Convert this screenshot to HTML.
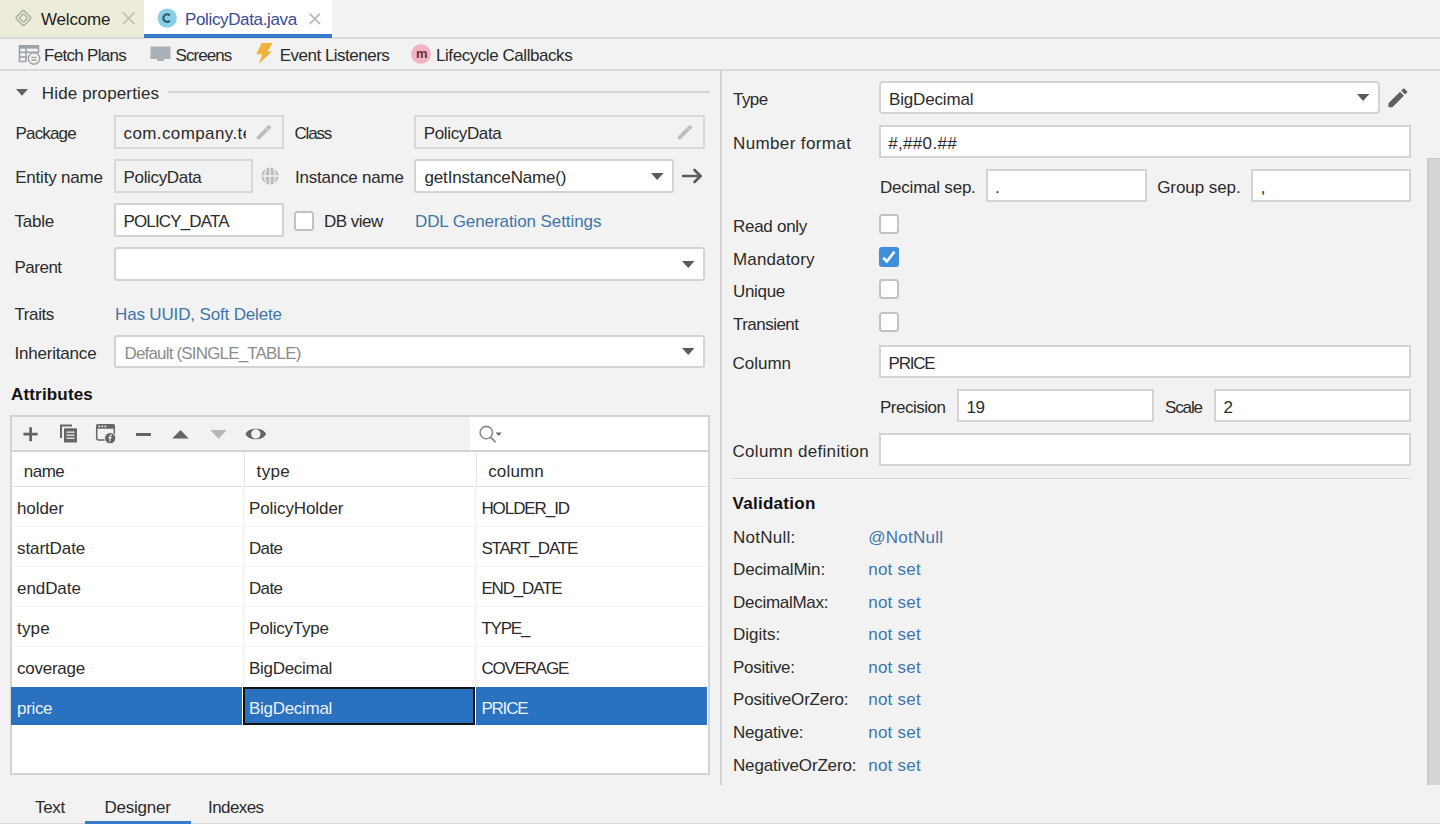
<!DOCTYPE html>
<html><head><meta charset="utf-8"><style>
*{box-sizing:border-box;margin:0;padding:0}
html,body{width:1440px;height:824px;overflow:hidden;background:#f2f2f2;font-family:"Liberation Sans",sans-serif;color:#2b2b2b}
.a{position:absolute}
.t{position:absolute;white-space:nowrap;font-size:17px;line-height:20px}
.f{position:absolute;background:#fff;border:2px solid #d3d3d3}
.fd{position:absolute;background:#f2f2f2;border:2px solid #d8d8d8}
.cb{position:absolute;width:20px;height:20px;background:#fff;border:2px solid #c2c2c2;border-radius:3.5px}
.hl{position:absolute;height:1px;background:#d4d4d4}
.vl{position:absolute;width:1px;background:#d4d4d4}
</style></head><body>
<div class="a" style="left:0;top:0;width:144px;height:37px;background:#ececd8"></div>
<div class="a" style="left:144px;top:0;width:188px;height:37px;background:#fff"></div>
<div class="a" style="left:0;top:37px;width:1440px;height:2px;background:#d9d9d9"></div>
<div class="a" style="left:144px;top:34px;width:188px;height:4px;background:#3a7bc9"></div>
<svg class="a" style="left:13px;top:8px" width="21" height="21" viewBox="13 8 21 21"><rect x="17.7" y="12.3" width="11.4" height="11.4" rx="2.2" transform="rotate(45 23.4 18)" fill="none" stroke="#aeb0a6" stroke-width="1.6"/><rect x="20.45" y="15.05" width="5.9" height="5.9" rx="1" transform="rotate(45 23.4 18)" fill="none" stroke="#aeb0a6" stroke-width="1.6"/></svg>
<div class="t" style="left:41.0px;top:10px;letter-spacing:-0.17px;color:#1e1e1e">Welcome</div>
<svg class="a" style="left:121px;top:11px" width="15" height="15" viewBox="0 0 15 15"><path d="M2 1.5 L13.4 12.9 M13.4 1.5 L2 12.9" stroke="#b8b8b0" stroke-width="1.4"/></svg>
<svg class="a" style="left:157px;top:8px" width="21" height="21" viewBox="0 0 21 21"><circle cx="10.2" cy="10.1" r="9.7" fill="#89cfe6"/><path d="M12.9 7.5 A3.8 3.8 0 1 0 12.9 12.7" fill="none" stroke="#2d5868" stroke-width="2.1"/></svg>
<div class="t" style="left:185.0px;top:10px;letter-spacing:-0.36px;color:#3a4a9c">PolicyData.java</div>
<svg class="a" style="left:308px;top:12px" width="14" height="14" viewBox="0 0 14 14"><path d="M1.6 1.6 L12 12 M12 1.6 L1.6 12" stroke="#b4b4b4" stroke-width="1.5"/></svg>
<div class="a" style="left:0;top:69px;width:1440px;height:2px;background:#d9d9d9"></div>
<svg class="a" style="left:18px;top:44px" width="24" height="21" viewBox="0 0 24 21"><g stroke="#9aa2aa" stroke-width="1.6" fill="none"><path d="M1.5 2 H20.5 V9"/><path d="M1.5 2 V17.5 H8"/><path d="M8 2 V17.5"/><path d="M1.5 8.3 H20.5"/><path d="M1.5 13 H9"/></g><rect x="1" y="1" width="20" height="3.6" fill="#9aa2aa"/><circle cx="16" cy="14.5" r="5.7" fill="#f2f2f2" stroke="#a3a3a3" stroke-width="1.5"/><path d="M13.3 13.3 H18.7 M13.3 16 H18.7" stroke="#a3a3a3" stroke-width="1.3"/></svg>
<div class="t" style="left:44.0px;top:46px;letter-spacing:-0.70px">Fetch Plans</div>
<svg class="a" style="left:150px;top:46px" width="21" height="16" viewBox="0 0 21 16"><rect x="0.5" y="0.5" width="20" height="12.5" fill="#a8b0b8"/><rect x="7" y="13" width="7" height="2" fill="#a8b0b8"/></svg>
<div class="t" style="left:175.5px;top:46px;letter-spacing:-0.92px">Screens</div>
<svg class="a" style="left:254px;top:41px" width="22" height="24" viewBox="254 41 22 24"><path d="M261.6 43.1 L272.4 43.1 L267.6 51.6 L271.9 51.6 L258.9 63.8 L262.2 54.2 L256.3 54.2 Z" fill="#f2b33c"/></svg>
<div class="t" style="left:279.7px;top:46px;letter-spacing:-0.50px">Event Listeners</div>
<div class="a" style="left:411.4px;top:43.5px;width:20px;height:20px;border-radius:50%;background:#f4b5c3"></div>
<div class="a" style="left:411.4px;top:46.8px;width:21px;text-align:center;font-size:13px;line-height:13px;font-weight:bold;color:#6a2d3c">m</div>
<div class="t" style="left:436.0px;top:46px;letter-spacing:-0.44px">Lifecycle Callbacks</div>
<div class="a" style="left:720px;top:70px;width:2px;height:715px;background:#d2d2d2"></div>
<svg class="a" style="left:16px;top:89.3px" width="12" height="6.8" viewBox="0 0 12 6.8"><path d="M0 0H12L6.0 6.8Z" fill="#626262"/></svg>
<div class="t" style="left:41.8px;top:84px;letter-spacing:0.14px">Hide properties</div>
<div class="a" style="left:168px;top:91px;width:542px;height:2px;background:#d6d6d6"></div>
<div class="t" style="left:15.5px;top:124px;letter-spacing:-0.83px">Package</div>
<div class="fd" style="left:114px;top:115px;width:170px;height:34px"></div>
<div class="a" style="left:115px;top:116px;width:130.5px;height:32px;overflow:hidden"><div class="t" style="left:8.5px;top:8px;letter-spacing:0.4px">com.company.test</div></div>
<svg class="a" style="left:256px;top:125px" width="16" height="15" viewBox="0 0 16 15"><path d="M2.6 12.6 L13 2.2" stroke="#bdbdbd" stroke-width="3.8" stroke-linecap="round"/><path d="M10.6 4.6 L11.6 3.6" stroke="#f2f2f2" stroke-width="1.1"/></svg>
<div class="t" style="left:294.5px;top:124px;letter-spacing:-1.20px">Class</div>
<div class="fd" style="left:414px;top:115px;width:291px;height:34px"></div>
<div class="t" style="left:423.8px;top:124px;letter-spacing:-0.37px">PolicyData</div>
<svg class="a" style="left:677px;top:125px" width="16" height="15" viewBox="0 0 16 15"><path d="M2.6 12.6 L13 2.2" stroke="#bdbdbd" stroke-width="3.8" stroke-linecap="round"/><path d="M10.6 4.6 L11.6 3.6" stroke="#f2f2f2" stroke-width="1.1"/></svg>
<div class="t" style="left:15.2px;top:168px;letter-spacing:-0.20px">Entity name</div>
<div class="fd" style="left:114px;top:159px;width:139px;height:34px"></div>
<div class="t" style="left:123.5px;top:168px;letter-spacing:-0.33px">PolicyData</div>
<svg class="a" style="left:261px;top:167px" width="18" height="18" viewBox="0 0 18 18"><circle cx="9" cy="9" r="8.6" fill="#bdbdbd"/><path d="M9 0.5 V17.5 M0.5 9 H17.5 M5.2 1.5 C3.5 6 3.5 12 5.2 16.5 M12.8 1.5 C14.5 6 14.5 12 12.8 16.5" stroke="#f2f2f2" stroke-width="1.3" fill="none"/></svg>
<div class="t" style="left:295.0px;top:168px;letter-spacing:-0.21px">Instance name</div>
<div class="f" style="left:414px;top:159px;width:260px;height:34px;border-radius:3px"></div>
<div class="t" style="left:424.5px;top:168px;letter-spacing:-0.16px">getInstanceName()</div>
<svg class="a" style="left:651px;top:173px" width="12.5" height="7" viewBox="0 0 12.5 7"><path d="M0 0H12.5L6.25 7Z" fill="#5a5a5a"/></svg>
<svg class="a" style="left:682px;top:168px" width="21" height="16" viewBox="0 0 21 16"><path d="M1 8 H18.5 M12.5 2 L18.7 8 L12.5 14" fill="none" stroke="#5c5c5c" stroke-width="2.6" stroke-linecap="round" stroke-linejoin="round"/></svg>
<div class="t" style="left:14.5px;top:212px;letter-spacing:-0.25px">Table</div>
<div class="f" style="left:114px;top:203px;width:170px;height:34px"></div>
<div class="t" style="left:123.5px;top:212px;letter-spacing:-0.85px">POLICY_DATA</div>
<div class="cb" style="left:294px;top:211px"></div>
<div class="t" style="left:324.0px;top:212px;letter-spacing:-0.50px">DB view</div>
<div class="t" style="left:415.0px;top:212px;letter-spacing:-0.09px;color:#3f76aa">DDL Generation Settings</div>
<div class="t" style="left:14.5px;top:258px;letter-spacing:-0.50px">Parent</div>
<div class="f" style="left:114px;top:247px;width:591px;height:34px;border-radius:3px"></div>
<svg class="a" style="left:682px;top:261px" width="12.5" height="7" viewBox="0 0 12.5 7"><path d="M0 0H12.5L6.25 7Z" fill="#5a5a5a"/></svg>
<div class="t" style="left:14.5px;top:305px;letter-spacing:-0.40px">Traits</div>
<div class="t" style="left:115.0px;top:305px;letter-spacing:-0.15px;color:#3f76aa">Has UUID, Soft Delete</div>
<div class="t" style="left:14.5px;top:344px;letter-spacing:-0.20px">Inheritance</div>
<div class="f" style="left:114px;top:335px;width:591px;height:33px;border-radius:3px"></div>
<div class="t" style="left:124.5px;top:344px;letter-spacing:-0.83px;color:#8c8c8c">Default (SINGLE_TABLE)</div>
<svg class="a" style="left:682px;top:348px" width="12.5" height="7" viewBox="0 0 12.5 7"><path d="M0 0H12.5L6.25 7Z" fill="#5a5a5a"/></svg>
<div class="t" style="left:11.0px;top:385px;letter-spacing:0.17px;color:#111;font-weight:bold">Attributes</div>
<div class="a" style="left:10px;top:415px;width:700px;height:360px;background:#fff;border:2px solid #d3d3d3"></div>
<div class="a" style="left:12px;top:417px;width:458px;height:34px;background:#f2f2f2"></div>
<div class="a" style="left:12px;top:450px;width:696px;height:2px;background:#d3d3d3"></div>
<svg class="a" style="left:22px;top:426px" width="17" height="17" viewBox="0 0 17 17"><path d="M8.6 1.2 V15.2 M1.4 8.2 H15.6" stroke="#626262" stroke-width="2.7"/></svg>
<svg class="a" style="left:59px;top:424px" width="19" height="19" viewBox="0 0 19 19"><path d="M1 0.5 H13 V2.5 H3 V14 H1 Z" fill="#666"/><rect x="5" y="4.3" width="13" height="14.2" fill="#666"/><path d="M7.5 8.2 H15.5 M7.5 11.2 H15.5 M7.5 14.2 H15.5" stroke="#f2f2f2" stroke-width="1.3"/></svg>
<svg class="a" style="left:95px;top:423px" width="22" height="22" viewBox="0 0 22 22"><rect x="1.7" y="1.7" width="17.6" height="15.4" rx="2" fill="none" stroke="#666" stroke-width="1.5"/><path d="M1 3 Q1 1 3 1 H18 Q20 1 20 3 V5.8 H1 Z" fill="#666"/><circle cx="4.3" cy="3.4" r="0.9" fill="#f2f2f2"/><circle cx="7.3" cy="3.4" r="0.9" fill="#f2f2f2"/><circle cx="10.3" cy="3.4" r="0.9" fill="#f2f2f2"/><circle cx="15.2" cy="15.2" r="5.6" fill="#636363" stroke="#f2f2f2" stroke-width="1"/><path d="M16.9 12.2 C15.6 11.9 14.9 12.5 14.9 13.6 V18.6 M13.5 14.7 H16.6" stroke="#f2f2f2" stroke-width="1.2" fill="none"/></svg>
<div class="a" style="left:136px;top:432.5px;width:14.5px;height:3px;background:#646464"></div>
<svg class="a" style="left:172px;top:430px" width="17" height="9" viewBox="0 0 17 9"><path d="M0.3 8.5 H16.7 L8.5 0 Z" fill="#646464"/></svg>
<svg class="a" style="left:210px;top:429.5px" width="17" height="9" viewBox="0 0 17 9"><path d="M0.3 0 H16.7 L8.5 8.8 Z" fill="#b6b6b6"/></svg>
<svg class="a" style="left:245px;top:426px" width="22" height="16" viewBox="0 0 22 16"><path d="M0.6 8 C3 1 18.6 1 21 8 C18.6 15 3 15 0.6 8 Z" fill="#646464"/><circle cx="10.8" cy="8" r="4.7" fill="#f2f2f2"/></svg>
<svg class="a" style="left:478px;top:424px" width="26" height="20" viewBox="478 424 26 20"><circle cx="486.3" cy="432.6" r="6.2" fill="none" stroke="#8a8a8a" stroke-width="1.6"/><path d="M490.8 437.4 L495 441.6" stroke="#8a8a8a" stroke-width="2" stroke-linecap="round"/><path d="M495.6 432.6 H501.8 L498.7 436 Z" fill="#6a6a6a"/></svg>
<div class="t" style="left:23.8px;top:462px;letter-spacing:-0.50px">name</div>
<div class="vl" style="left:244px;top:452px;height:34px;background:#e6e6e6"></div>
<div class="t" style="left:256.6px;top:462px;letter-spacing:0.33px">type</div>
<div class="vl" style="left:476px;top:452px;height:34px;background:#e6e6e6"></div>
<div class="t" style="left:488.2px;top:462px;letter-spacing:0.16px">column</div>
<div class="hl" style="left:11px;top:486px;width:698px;background:#e2e2e2"></div>
<div class="vl" style="left:243px;top:487px;height:200px;background:#f1f1f1"></div>
<div class="vl" style="left:475px;top:487px;height:200px;background:#f1f1f1"></div>
<div class="hl" style="left:11px;top:526px;width:698px;background:#f4f4f4"></div>
<div class="hl" style="left:11px;top:566px;width:698px;background:#f4f4f4"></div>
<div class="hl" style="left:11px;top:606px;width:698px;background:#f4f4f4"></div>
<div class="hl" style="left:11px;top:646px;width:698px;background:#f4f4f4"></div>
<div class="t" style="left:17.0px;top:499px;letter-spacing:-0.08px">holder</div>
<div class="t" style="left:249.0px;top:499px;letter-spacing:-0.09px">PolicyHolder</div>
<div class="t" style="left:481.4px;top:499px;letter-spacing:-1.07px">HOLDER_ID</div>
<div class="t" style="left:17.0px;top:539px;letter-spacing:-0.09px">startDate</div>
<div class="t" style="left:249.0px;top:539px;letter-spacing:-0.67px">Date</div>
<div class="t" style="left:481.4px;top:539px;letter-spacing:-1.20px">START_DATE</div>
<div class="t" style="left:17.0px;top:579px;letter-spacing:-0.07px">endDate</div>
<div class="t" style="left:249.0px;top:579px;letter-spacing:-0.67px">Date</div>
<div class="t" style="left:481.4px;top:579px;letter-spacing:-1.16px">END_DATE</div>
<div class="t" style="left:17.0px;top:619px;letter-spacing:0.20px">type</div>
<div class="t" style="left:249.0px;top:619px;letter-spacing:-0.26px">PolicyType</div>
<div class="t" style="left:481.4px;top:619px;letter-spacing:-1.20px">TYPE_</div>
<div class="t" style="left:17.0px;top:659px;letter-spacing:-0.24px">coverage</div>
<div class="t" style="left:249.0px;top:659px;letter-spacing:-0.29px">BigDecimal</div>
<div class="t" style="left:481.4px;top:659px;letter-spacing:-1.20px">COVERAGE</div>
<div class="a" style="left:11px;top:687px;width:231px;height:38px;background:#2a72bf"></div>
<div class="a" style="left:243px;top:687px;width:232px;height:38px;background:#2a72bf;border:2px solid #121212"></div>
<div class="a" style="left:476px;top:687px;width:231px;height:38px;background:#2a72bf"></div>
<div class="t" style="left:17.0px;top:699px;letter-spacing:-0.32px;color:#e8f1fb">price</div>
<div class="t" style="left:249.0px;top:699px;letter-spacing:-0.29px;color:#e8f1fb">BigDecimal</div>
<div class="t" style="left:481.4px;top:699px;letter-spacing:-1.20px;color:#e8f1fb">PRICE</div>
<div class="t" style="left:35.0px;top:798px;letter-spacing:-0.33px">Text</div>
<div class="t" style="left:104.6px;top:798px;letter-spacing:-0.26px">Designer</div>
<div class="t" style="left:208.0px;top:798px;letter-spacing:-0.57px">Indexes</div>
<div class="a" style="left:85px;top:821px;width:106px;height:3px;background:#3a7bc9"></div>
<div class="hl" style="left:0;top:823px;width:85px;background:#d9d9d9"></div>
<div class="hl" style="left:191px;top:823px;width:1249px;background:#d9d9d9"></div>
<div class="a" style="left:1427px;top:158px;width:13px;height:627px;background:#d6d6d6;border-left:2px solid #cbcbcb;border-top:1px solid #c9c9c9"></div>
<div class="t" style="left:733.0px;top:90px;letter-spacing:-0.57px">Type</div>
<div class="f" style="left:879px;top:81px;width:501px;height:33px;border-radius:4px"></div>
<div class="t" style="left:889.0px;top:90px;letter-spacing:-0.16px">BigDecimal</div>
<svg class="a" style="left:1357px;top:94.4px" width="12.2" height="7" viewBox="0 0 12.2 7"><path d="M0 0H12.2L6.1 7Z" fill="#5a5a5a"/></svg>
<svg class="a" style="left:1388px;top:88px" width="19.5" height="19.5" viewBox="2.6 2.6 18.6 18.6"><path d="M3 17.25V21h3.75L17.81 9.94l-3.75-3.75L3 17.25zM20.71 7.04c.39-.39.39-1.02 0-1.41l-2.34-2.34c-.39-.39-1.02-.39-1.41 0l-1.83 1.83 3.75 3.75 1.83-1.83z" fill="#606060"/></svg>
<div class="t" style="left:733.0px;top:134px;letter-spacing:0.38px">Number format</div>
<div class="f" style="left:879px;top:125px;width:532px;height:33px"></div>
<div class="t" style="left:888.2px;top:134px;letter-spacing:0.33px">#,##0.##</div>
<div class="t" style="left:880.0px;top:178px;letter-spacing:-0.22px">Decimal sep.</div>
<div class="f" style="left:986px;top:169px;width:161px;height:33px"></div>
<div class="t" style="left:995.0px;top:178px">.</div>
<div class="t" style="left:1157.2px;top:178px;letter-spacing:-0.07px">Group sep.</div>
<div class="f" style="left:1251px;top:169px;width:160px;height:33px"></div>
<div class="t" style="left:1260.7px;top:178px">,</div>
<div class="t" style="left:733.0px;top:217px;letter-spacing:-0.28px">Read only</div>
<div class="cb" style="left:879px;top:214px"></div>
<div class="t" style="left:733.0px;top:250px;letter-spacing:0.14px">Mandatory</div>
<svg class="a" style="left:879px;top:247px" width="20" height="20" viewBox="0 0 20 20"><rect x="0" y="0" width="20" height="20" rx="3" fill="#3f8edb"/><path d="M4.3 10.8 L7.8 14.5 L15.5 4.6" fill="none" stroke="#f4faff" stroke-width="2.7"/></svg>
<div class="t" style="left:733.0px;top:282px;letter-spacing:-0.32px">Unique</div>
<div class="cb" style="left:879px;top:279px"></div>
<div class="t" style="left:733.0px;top:315px;letter-spacing:-0.53px">Transient</div>
<div class="cb" style="left:879px;top:312px"></div>
<div class="t" style="left:732.5px;top:354px">Column</div>
<div class="f" style="left:879px;top:345px;width:532px;height:33px"></div>
<div class="t" style="left:888.5px;top:354px;letter-spacing:-1.20px">PRICE</div>
<div class="t" style="left:880.0px;top:398px;letter-spacing:-0.50px">Precision</div>
<div class="f" style="left:957px;top:389px;width:197px;height:33px"></div>
<div class="t" style="left:966.5px;top:398px;letter-spacing:-0.50px">19</div>
<div class="t" style="left:1165.0px;top:398px;letter-spacing:-1.12px">Scale</div>
<div class="f" style="left:1214px;top:389px;width:197px;height:33px"></div>
<div class="t" style="left:1223.5px;top:398px">2</div>
<div class="t" style="left:732.5px;top:442px;letter-spacing:0.31px">Column definition</div>
<div class="f" style="left:879px;top:433px;width:532px;height:33px"></div>
<div class="hl" style="left:732px;top:478px;width:679px;background:#d6d6d6"></div>
<div class="t" style="left:732.5px;top:494px;letter-spacing:0.28px;color:#111;font-weight:bold">Validation</div>
<div class="t" style="left:733.0px;top:528px;letter-spacing:0.26px">NotNull:</div>
<div class="t" style="left:868.2px;top:528px;letter-spacing:0.26px;color:#3f76aa">@NotNull</div>
<div class="t" style="left:733.0px;top:560px;letter-spacing:-0.14px">DecimalMin:</div>
<div class="t" style="left:868.2px;top:560px;letter-spacing:0.25px;color:#3f76aa">not set</div>
<div class="t" style="left:733.0px;top:593px;letter-spacing:-0.28px">DecimalMax:</div>
<div class="t" style="left:868.2px;top:593px;letter-spacing:0.25px;color:#3f76aa">not set</div>
<div class="t" style="left:733.0px;top:625px">Digits:</div>
<div class="t" style="left:868.2px;top:625px;letter-spacing:0.25px;color:#3f76aa">not set</div>
<div class="t" style="left:733.0px;top:658px;letter-spacing:-0.28px">Positive:</div>
<div class="t" style="left:868.2px;top:658px;letter-spacing:0.25px;color:#3f76aa">not set</div>
<div class="t" style="left:733.0px;top:690px;letter-spacing:-0.18px">PositiveOrZero:</div>
<div class="t" style="left:868.2px;top:690px;letter-spacing:0.25px;color:#3f76aa">not set</div>
<div class="t" style="left:733.0px;top:723px;letter-spacing:-0.18px">Negative:</div>
<div class="t" style="left:868.2px;top:723px;letter-spacing:0.25px;color:#3f76aa">not set</div>
<div class="t" style="left:733.0px;top:756px;letter-spacing:-0.16px">NegativeOrZero:</div>
<div class="t" style="left:868.2px;top:756px;letter-spacing:0.25px;color:#3f76aa">not set</div>
</body></html>
